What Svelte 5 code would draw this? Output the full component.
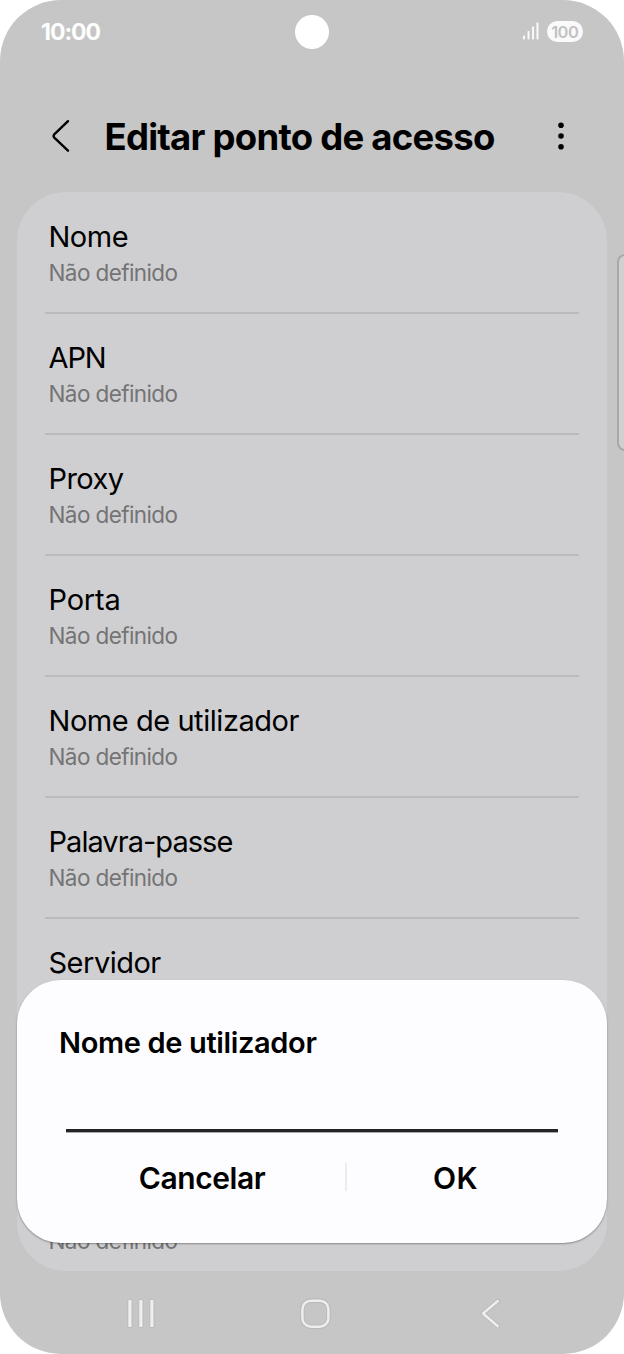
<script>
  const rows = [
    { title: 'Nome', value: 'Não definido', spacing: -0.5 },
    { title: 'APN', value: 'Não definido', spacing: -1.1 },
    { title: 'Proxy', value: 'Não definido', spacing: -0.6 },
    { title: 'Porta', value: 'Não definido', spacing: -0.2 },
    { title: 'Nome de utilizador', value: 'Não definido', spacing: -0.45 },
    { title: 'Palavra-passe', value: 'Não definido', spacing: -0.96 },
    { title: 'Servidor', value: '', spacing: -0.5 },
    { title: '', value: '', spacing: 0 },
    { title: '', value: 'Não definido', spacing: 0 }
  ];
</script>

<div class="phone">
  <div class="status">
    <span class="time">10:00</span>
    <div class="indicators">
      <svg width="18" height="19" viewBox="0 0 18 19" fill="#fafafa">
        <rect x="1" y="13.5" width="2" height="4" rx=".7" />
        <rect x="5.5" y="9" width="2" height="8.5" rx=".7" />
        <rect x="10" y="4.5" width="2" height="13" rx=".7" />
        <rect x="14.5" y="0.5" width="2" height="17" rx=".7" />
      </svg>
      <span class="battery">100</span>
    </div>
    <span class="camera"></span>
  </div>

  <header>
    <svg class="back" width="20" height="34" viewBox="0 0 20 34" fill="none" stroke="#000" stroke-width="2.4" stroke-linecap="round" stroke-linejoin="round">
      <path d="M18 2.2 4 15.7Q2.9 17 4 18.3L18 31.7" />
    </svg>
    <h1>Editar ponto de acesso</h1>
    <svg class="more" width="8" height="30" viewBox="0 0 8 30">
      <circle cx="4" cy="4.3" r="2.8" /><circle cx="4" cy="15" r="2.8" /><circle cx="4" cy="25.8" r="2.8" />
    </svg>
  </header>

  <main>
    {#each rows as row}
      <div class="row">
        <span class="title" style="letter-spacing: {row.spacing}px">{row.title}</span>
        <span class="value">{row.value}</span>
      </div>
    {/each}
  </main>

  <nav>
    <svg width="32" height="32" viewBox="0 0 32 32">
      <g fill="#efefef" stroke="#b9b9b9" stroke-width="1">
        <rect x="2.8" y="1.5" width="4.2" height="28" rx="1" />
        <rect x="13.8" y="1.5" width="4.2" height="28" rx="1" />
        <rect x="24.8" y="1.5" width="4.2" height="28" rx="1" />
      </g>
    </svg>
    <svg width="32" height="32" viewBox="0 0 32 32" fill="none">
      <rect x="2.4" y="2.7" width="26" height="26" rx="8.5" stroke="#b9b9b9" stroke-width="4.4" />
      <rect x="2.4" y="2.7" width="26" height="26" rx="8.5" stroke="#eee" stroke-width="2.5" />
    </svg>
    <svg width="32" height="32" viewBox="0 0 32 32" fill="none" stroke-linecap="round" stroke-linejoin="round">
      <path d="M22.8 3 8 15.5 22.8 28.2" stroke="#b9b9b9" stroke-width="4.4" />
      <path d="M22.8 3 8 15.5 22.8 28.2" stroke="#eee" stroke-width="2.5" />
    </svg>
  </nav>

  <div class="edge"></div>

  <section class="dialog">
    <h2>Nome de utilizador</h2>
    <div class="field"></div>
    <div class="actions">
      <span class="cancel">Cancelar</span>
      <i></i>
      <span class="ok">OK</span>
    </div>
  </section>
</div>

<style>
  :global(body) { background: #fff; }
  .phone {
    position: relative;
    box-sizing: border-box;
    width: 624px;
    height: 1354px;
    display: flex;
    flex-direction: column;
    overflow: hidden;
    border-radius: 61px;
    background: #c6c6c6;
    color: #000;
    font-family: Inter, Roboto, sans-serif;
    white-space: nowrap;
  }
  .status {
    position: relative;
    height: 64px;
    flex: none;
    display: flex;
    justify-content: space-between;
    align-items: center;
    padding: 0 41px 0 41px;
    box-sizing: border-box;
  }
  .time { font-size: 23px; font-weight: 650; color: #fff; letter-spacing: -1px; }
  .indicators { display: flex; align-items: center; gap: 7px; margin-top: -1px; }
  .battery {
    width: 36.5px; height: 21px; border-radius: 11px; background: #fafafa;
    color: #c2c2c2; font-size: 16.5px; font-weight: 600; line-height: 22px; text-align: center; letter-spacing: -.5px;
  }
  .camera {
    position: absolute; left: 295px; top: 15px; width: 34px; height: 34px; border-radius: 50%; background: #fff;
  }
  header {
    height: 128px;
    flex: none;
    display: flex;
    align-items: center;
    padding: 0 59px 0 50px;
    box-sizing: border-box;
  }
  .back { margin-top: 16px; }
  .more { margin: 16px 0 0 auto; }
  h1 { margin: 17px 0 0 34.5px; font-size: 36.5px; line-height: 44px; font-weight: 650; letter-spacing: -.75px; }
  main {
    height: 1079px;
    box-sizing: border-box;
    flex: none;
    margin: 0 17px;
    padding-top: 1px;
    border-radius: 49px;
    background: #cfcfd1;
    overflow: hidden;
  }
  .row {
    box-sizing: border-box;
    height: 121px;
    margin: 0 28px;
    padding: 26px 4px 0;
    border-bottom: 2px solid #bbbbbd;
    display: flex;
    flex-direction: column;
  }
  .title { height: 37px; line-height: 36px; font-size: 29px; margin-left: -.5px; }
  .value { height: 34px; line-height: 34px; font-size: 22.5px; color: #747475; letter-spacing: -.6px; margin-left: -.5px; }
  nav {
    flex: 1;
    display: flex;
    justify-content: space-between;
    align-items: center;
    padding: 2px 117px 0 125px;
  }
  .edge {
    position: absolute; left: 616.5px; top: 253.5px; width: 16px; height: 197px; box-sizing: border-box;
    border: 2px solid #a8a8aa; border-radius: 8px; background: #d0d0d3;
  }
  .dialog {
    position: absolute; left: 17px; top: 980px; width: 590px; height: 263px; box-sizing: border-box;
    padding: 43px 49px 0 42px;
    border-radius: 44px;
    background: #fdfdff;
    box-shadow: 0 1px 2px rgba(0, 0, 0, .35);
  }
  h2 { margin: 0; font-size: 29px; line-height: 40px; height: 40px; font-weight: 600; letter-spacing: -.35px; }
  .field { height: 66px; margin-left: 7px; border-bottom: 3px solid #252527; box-shadow: 0 1px 0 #a8a8aa; }
  .actions { display: flex; align-items: center; height: 90px; font-size: 30px; font-weight: 600; }
  .cancel { width: 286px; text-align: center; letter-spacing: -.45px; padding-top: 2px; box-sizing: border-box; }
  .actions i { width: 2px; height: 28px; background: #ececee; }
  .ok { flex: 1; text-align: center; padding: 2px 0 0 6px; letter-spacing: .4px; }
</style>
